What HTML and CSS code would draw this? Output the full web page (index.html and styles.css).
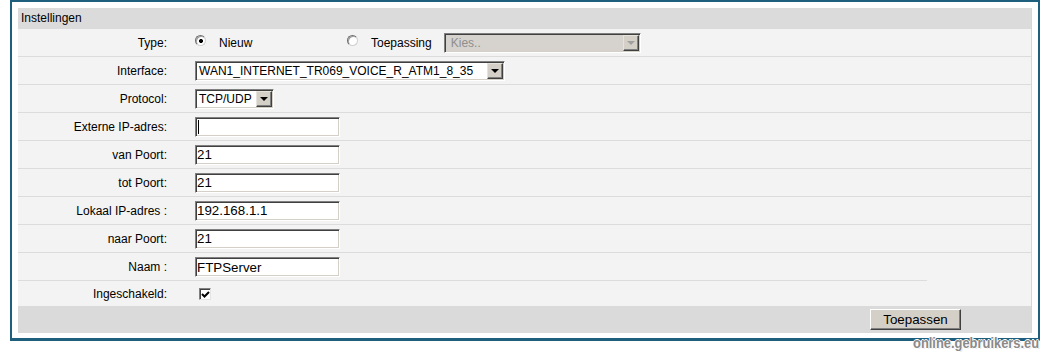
FILE: index.html
```html
<!DOCTYPE html>
<html lang="nl">
<head>
  <meta charset="UTF-8">
  <title>Port forwarding - Instellingen</title>
  <link rel="stylesheet" href="styles.css">
</head>
<body>

  <div class="frame">
    <div class="panel">
      <div class="panel-head">Instellingen</div>

      <div class="row">
        <div class="label">Type:</div>
        <div class="value">
          <span class="opt opt-new"><span class="radio checked"></span>Nieuw</span>
          <span class="opt"><span class="radio"></span>Toepassing</span>
          <span class="select sel-kies disabled"><span class="sel-text">Kies..</span><span class="sel-btn"></span></span>
        </div>
      </div>

      <div class="row">
        <div class="label">Interface:</div>
        <div class="value">
          <span class="select sel-iface"><span class="sel-text">WAN1_INTERNET_TR069_VOICE_R_ATM1_8_35</span><span class="sel-btn"></span></span>
        </div>
      </div>

      <div class="row">
        <div class="label">Protocol:</div>
        <div class="value">
          <span class="select sel-proto"><span class="sel-text">TCP/UDP</span><span class="sel-btn"></span></span>
        </div>
      </div>

      <div class="row">
        <div class="label">Externe IP-adres:</div>
        <div class="value"><input class="field caret" type="text" value=""></div>
      </div>

      <div class="row">
        <div class="label">van Poort:</div>
        <div class="value"><input class="field" type="text" value="21"></div>
      </div>

      <div class="row">
        <div class="label">tot Poort:</div>
        <div class="value"><input class="field" type="text" value="21"></div>
      </div>

      <div class="row">
        <div class="label">Lokaal IP-adres :</div>
        <div class="value"><input class="field" type="text" value="192.168.1.1"></div>
      </div>

      <div class="row">
        <div class="label">naar Poort:</div>
        <div class="value"><input class="field" type="text" value="21"></div>
      </div>

      <div class="row row-short">
        <div class="label">Naam :</div>
        <div class="value"><input class="field" type="text" value="FTPServer"></div>
      </div>

      <div class="row row-last">
        <div class="label">Ingeschakeld:</div>
        <div class="value">
          <span class="check">
            <svg width="9" height="9" viewBox="0 0 9 9"><path d="M1 4 L3.5 6.5 L8 2" fill="none" stroke="#000" stroke-width="2"/></svg>
          </span>
        </div>
      </div>

      <div class="panel-foot">
        <button class="btn">Toepassen</button>
      </div>
    </div>

    <div class="watermark">online.gebruikers.eu</div>
  </div>

</body>
</html>
```

FILE: styles.css
```css
* { margin: 0; padding: 0; box-sizing: border-box; }
html, body { min-height: 100vh; }
body { background: #fff; font-family: "Liberation Sans", Arial, sans-serif; font-size: 12px; color: #000; }

.frame { position: relative; width: 1030px; margin-left: 10px; border: 2px solid #1e5f7d; border-bottom-width: 3px; padding: 6px 6px 5px 6px; background: #fff; }
.panel { width: 1014px; border-right: 1px solid #d6d6d6; background: #f3f3f3; }
.panel-head { height: 21px; line-height: 21px; padding-left: 3px; background: #dbdbdb; }

.row { display: flex; align-items: center; height: 28px; border-bottom: 1px solid #dcdcdc; }
.row-short { border-bottom: none; background: linear-gradient(#dcdcdc, #dcdcdc) no-repeat left bottom / 909px 1px; }
.row-last { height: 25px; border-bottom: none; }
.label { width: 162px; padding-right: 13px; text-align: right; }
.value { display: flex; align-items: center; padding-left: 15px; }

/* radio buttons */
.opt { display: inline-flex; align-items: center; gap: 13px; }
.opt-new { width: 152px; }
.radio { width: 11px; height: 11px; border-radius: 50%; border: 1px solid; border-color: #6e6e6e #d0d0d0 #d0d0d0 #6e6e6e; background: #fff; box-shadow: inset 1px 1px #a0a0a0; margin-top: -4px; }
.radio.checked { background: radial-gradient(circle at 5px 5px, #000 0 1.7px, #fff 2.3px); }

/* select boxes */
.select { display: inline-flex; align-items: center; height: 20px; padding: 1px; background: #fff; border: 1px solid; border-color: #808080 #fff #fff #808080; box-shadow: inset 1px 1px #404040, inset -1px -1px #d4d0c8; }
.sel-text { flex: 1; padding-left: 2px; white-space: nowrap; overflow: hidden; }
.sel-btn { position: relative; width: 16px; height: 16px; background: #d4d0c8; border: 1px solid; border-color: #e6e3dd #404040 #404040 #e6e3dd; box-shadow: inset -1px -1px #808080; }
.sel-btn::after { content: ""; position: absolute; left: 3px; top: 5px; border-style: solid; border-width: 4px 4px 0 4px; border-color: #000 transparent transparent transparent; }
.sel-iface { width: 310px; }
.sel-proto { width: 79px; }
.sel-kies { width: 197px; margin-left: 12px; }
.select.disabled { background: #d6d3ce; color: #8e8e8e; }
.select.disabled .sel-text { padding-left: 5px; }
.select.disabled .sel-btn::after { border-top-color: #a0a0a0; }

/* text fields */
.field { width: 145px; height: 20px; padding: 0 1px; font-family: "Liberation Sans", Arial, sans-serif; font-size: 13.33px; color: #000; background: #fff; border: 1px solid; border-color: #808080 #fff #fff #808080; box-shadow: inset 1px 1px #404040, inset -1px -1px #d4d0c8; outline: none; }
.field.caret { background: #fff linear-gradient(#000, #000) no-repeat 2px 2px / 1px 14px; }

/* checkbox */
.check { display: inline-flex; align-items: center; justify-content: center; width: 12px; height: 12px; margin-left: 4px; background: #fff; border: 1px solid; border-color: #808080 #e4e4e4 #e4e4e4 #808080; box-shadow: inset 1px 1px #404040; }
.check svg { margin: 1px 0 0 1px; }

.panel-foot { display: flex; justify-content: flex-end; align-items: flex-start; height: 27px; padding: 3px 70px 0 0; background: #dadada; }
.btn { width: 91px; height: 21px; font-family: "Liberation Sans", Arial, sans-serif; font-size: 13.33px; color: #000; background: #d4d0c8; border: 1px solid; border-color: #fff #404040 #404040 #fff; box-shadow: inset -1px -1px #808080; }

.watermark { position: absolute; left: 901px; top: 333px; font-size: 15px; line-height: 15px; font-weight: bold; color: #8a8a8a; white-space: nowrap; transform: scaleX(0.86); transform-origin: left top; text-shadow: 1px 0 #fff, -1px 0 #fff, 0 1px #fff, 0 -1px #fff, 1px 1px #ddd; }
```
